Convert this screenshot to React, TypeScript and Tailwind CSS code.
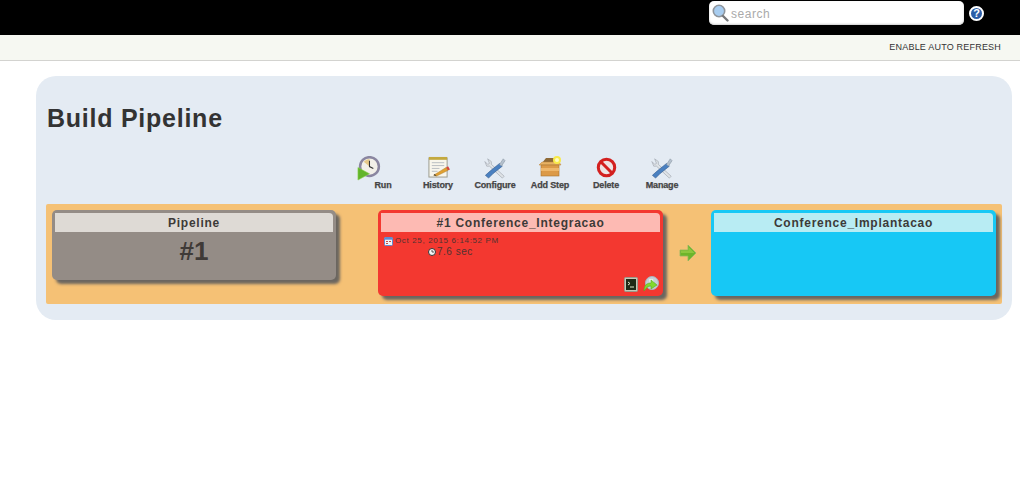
const Wrench = () => (
  <svg width="22" height="22" viewBox="0 0 24 24" className="mt-[1px]">
    <path d="M4 2 L8 5 L8 8 L22 21 L20 23 L6 10 L3 10 L1 5 L4 8 L6 7 Z" fill="#dfe3e7" stroke="#a6acb3" strokeWidth="0.8" />
    <path d="M17 7 L20 10 L10 18 L5 23 L1.5 20 L7 15 Z" fill="#4a80c0" stroke="#2c5488" strokeWidth="0.6" />
    <path d="M17 8 L21 2 L23 4 L19 10 Z" fill="#b4c0cd" stroke="#8794a2" strokeWidth="0.6" />
  </svg>
);

const RunIcon = () => (
  <svg width="24" height="25" viewBox="0 0 25 26">
    <circle cx="13" cy="11" r="9.8" fill="#f2f0e8" stroke="#8a86a0" strokeWidth="2.6" />
    <path d="M13 3 L13 11 L7 6 A9 9 0 0 1 13 3 Z" fill="#e5c98a" />
    <path d="M13 5 L13 11 L17 13" fill="none" stroke="#333" strokeWidth="1.1" />
    <path d="M1 12 L1 25 L13 18.5 Z" fill="#62b52a" stroke="#8cd04e" strokeWidth="0.6" />
  </svg>
);

const HistoryIcon = () => (
  <svg width="23" height="22" viewBox="0 0 24 23">
    <rect x="2" y="2" width="19" height="20" fill="#f8f6ec" stroke="#9a9a8c" />
    <rect x="2" y="1" width="19" height="3" fill="#c3a93f" />
    <path d="M5 7h13M5 10h13M5 13h8M5 16h6" stroke="#b6bcc0" strokeWidth="1" />
    <path d="M7 20 L20 12 L22 15 L10 21 Z" fill="#e0a030" stroke="#a87420" strokeWidth="0.5" />
    <path d="M20 12 L22 10.8 L24 14 L22 15 Z" fill="#d8453a" />
    <path d="M7 20 L8 18.8 L10 21 Z" fill="#333" />
  </svg>
);

const AddStepIcon = () => (
  <svg width="24" height="21" viewBox="0 0 24 21">
    <path d="M4 7 L8 2 L18 2 L21 7 Z" fill="#8f6a36" />
    <path d="M1 9 L4 6 L21 6 L23 9 Z" fill="#e8b264" stroke="#b88238" strokeWidth="0.5" />
    <rect x="3" y="9" width="18" height="11" fill="#dc9a48" stroke="#a87430" strokeWidth="0.6" />
    <rect x="3" y="12" width="18" height="3" fill="#eeb76b" />
    <circle cx="19" cy="4" r="4" fill="#f8ea4a" />
    <circle cx="19" cy="4" r="2" fill="#fffbc0" />
  </svg>
);

const DeleteIcon = () => (
  <svg width="21" height="21" viewBox="0 0 22 22" className="mt-[1px]">
    <circle cx="11" cy="11" r="8.6" fill="#eee4e4" stroke="#d3201f" strokeWidth="3.2" />
    <path d="M5 5 L17 17" stroke="#d3201f" strokeWidth="3.2" />
  </svg>
);

const SearchIcon = () => (
  <svg width="17" height="18" viewBox="0 0 17 18" className="shrink-0">
    <circle cx="7" cy="7" r="5.7" fill="#a8cdf0" stroke="#8f959c" strokeWidth="1.6" />
    <path d="M11 12 L15.5 16.5" stroke="#77797c" strokeWidth="2.4" strokeLinecap="round" />
  </svg>
);

const CalendarIcon = () => (
  <svg width="9" height="9" viewBox="0 0 9 9" className="shrink-0">
    <rect x="0.5" y="0.5" width="8" height="8" rx="1" fill="#f4f4f4" stroke="#5f8bd0" />
    <rect x="0.5" y="0.5" width="8" height="2.2" fill="#5f8bd0" />
    <path d="M2 4.5h2M5 4.5h2M2 6.5h2" stroke="#c0504d" strokeWidth="1" />
  </svg>
);

const ClockIcon = () => (
  <svg width="8" height="8" viewBox="0 0 8 8" className="shrink-0">
    <circle cx="4" cy="4" r="3.5" fill="#f4f4f4" stroke="#333" />
    <path d="M4 2 V4 H6" fill="none" stroke="#333" strokeWidth="0.8" />
  </svg>
);

const ToolItem = ({ icon, label, offset, className }: { icon: React.ReactNode; label: string; offset?: boolean; className?: string }) => (
  <div className={`flex w-[56px] flex-col items-center ${className ?? ""}`}>
    <div className={`flex h-[23px] items-start ${offset ? "mr-[28px]" : ""}`}>{icon}</div>
    <div className="whitespace-nowrap text-[9px] leading-[12px] font-bold text-[#444] [-webkit-text-stroke:0.25px_#444] tracking-[-0.15px]">
      {label}
    </div>
  </div>
);

const Card = ({
  title,
  border,
  headerBg,
  className,
  children,
}: {
  title: string;
  border: string;
  headerBg: string;
  className: string;
  children?: React.ReactNode;
}) => (
  <div className={`flex flex-col rounded-[5px] shadow-[4px_4px_3px_#6b6660] ${border} ${className}`}>
    <div className={`mx-[3px] mt-[3px] h-[19px] rounded-tr-[4px] text-center text-[12px] leading-[20px] font-bold tracking-[0.75px] text-[#3d3a38] ${headerBg}`}>
      {title}
    </div>
    {children}
  </div>
);

export default function App() {
  return (
    <div className="h-[501px] w-[1020px] overflow-hidden bg-white font-['Liberation_Sans',Arial,sans-serif]">
      <header className="flex h-[35px] items-start justify-end bg-black pt-[1px] pr-[36px]">
        <div className="flex h-[24px] w-[255px] items-center rounded-[5px] bg-white pl-[3px] shadow-[inset_0_-1px_2px_#cfcfcf]">
          <SearchIcon />
          <span className="mt-[1px] ml-[2px] text-[12px] tracking-[0.55px] text-[#aaa]">search</span>
        </div>
        <div className="mt-[5px] ml-[5px] flex h-[15px] w-[15px] items-center justify-center rounded-full border-[2px] border-white bg-[#2c5ea8] text-[11px] leading-none font-bold text-white">
          ?
        </div>
      </header>

      <div className="flex h-[26px] items-center justify-end border-b border-[#d3d3d0] bg-[#f6f8f2] pt-[1px] pr-[19px]">
        <span className="text-[9px] tracking-[0.2px] text-[#333]">ENABLE AUTO REFRESH</span>
      </div>

      <main className="mt-[15px] ml-[36px] h-[244px] w-[976px] rounded-[20px] bg-[#e4ebf3] px-[10px]">
        <h1 className="pt-[26px] pl-[1px] text-[25px] leading-[32px] font-bold tracking-[0.75px] text-[#333]">Build Pipeline</h1>

        <div className="mt-[22px] ml-[309px] flex h-[48px] items-start">
          <ToolItem icon={<RunIcon />} label="Run" offset />
          <ToolItem icon={<HistoryIcon />} label="History" className="-ml-[1px]" />
          <ToolItem icon={<Wrench />} label="Configure" className="ml-[1px]" />
          <ToolItem icon={<AddStepIcon />} label="Add Step" className="-ml-[1px]" />
          <ToolItem icon={<DeleteIcon />} label="Delete" />
          <ToolItem icon={<Wrench />} label="Manage" />
        </div>

        <div className="flex h-[100px] items-start rounded-[2px] bg-[#f5c175] pt-[6px] pl-[6px]">
          <Card title="Pipeline" border="bg-[#948c86]" headerBg="bg-[#dedad5]" className="h-[70px] w-[284px]">
            <div className="pt-[4px] text-center text-[26px] leading-[30px] font-bold text-[#3f3a37]">#1</div>
          </Card>

          <Card title="#1 Conference_Integracao" border="bg-[#f33830]" headerBg="bg-[#fdbab3]" className="ml-[42px] h-[86px] w-[285px]">
            <div className="flex items-center pt-[4px] pl-[6px] text-[8px] leading-[10px] tracking-[0.65px] text-[#4f3330]">
              <CalendarIcon />
              <span className="ml-[2px]">Oct 25, 2015 6:14:52 PM</span>
            </div>
            <div className="flex items-center pt-[1px] pl-[50px] text-[10px] leading-[10px] tracking-[0.5px] text-[#4f3330]">
              <ClockIcon />
              <span className="ml-[1px]">7.6 sec</span>
            </div>
            <div className="mt-auto mr-[4px] mb-[3px] flex items-center justify-end gap-[5px]">
              <svg width="14" height="15" viewBox="0 0 14 15">
                <rect x="0.5" y="0.5" width="13" height="14" rx="1" fill="#c9c9b8" stroke="#9a9a8a" />
                <rect x="2" y="2" width="10" height="11" fill="#1f2a16" />
                <path d="M4 5 L6 6.5 L4 8 M6 10 H10" stroke="#dfe8c8" strokeWidth="1" fill="none" />
              </svg>
              <svg width="16" height="17" viewBox="0 0 16 17">
                <circle cx="9" cy="7" r="6.5" fill="#c5d0d8" stroke="#aab4bc" />
                <path d="M6 3 L10 3 L11 7 L7 9 Z" fill="#e7efe7" />
                <path d="M1 15 C1 9 4 7 8 7 L8 4 L14 9 L8 13 L8 10 C5 10 3 12 1 15 Z" fill="#82d82e" stroke="#5aa820" strokeWidth="0.6" />
              </svg>
            </div>
          </Card>

          <div className="flex h-[86px] w-[48px] items-center justify-center pl-[1px]">
            <svg width="18" height="18" viewBox="0 0 18 18">
              <path d="M1 6 H9 V1 L17 9 L9 17 V12 H1 Z" fill="#6db52a" stroke="#8fb860" strokeWidth="0.8" />
              <path d="M2 6.5 H9.5 V3 L15.5 9 H2 Z" fill="#8cc63f" />
            </svg>
          </div>

          <Card title="Conference_Implantacao" border="bg-[#17c8f5]" headerBg="bg-[#b8ecf3]" className="h-[86px] w-[285px]" />
        </div>
      </main>
    </div>
  );
}
